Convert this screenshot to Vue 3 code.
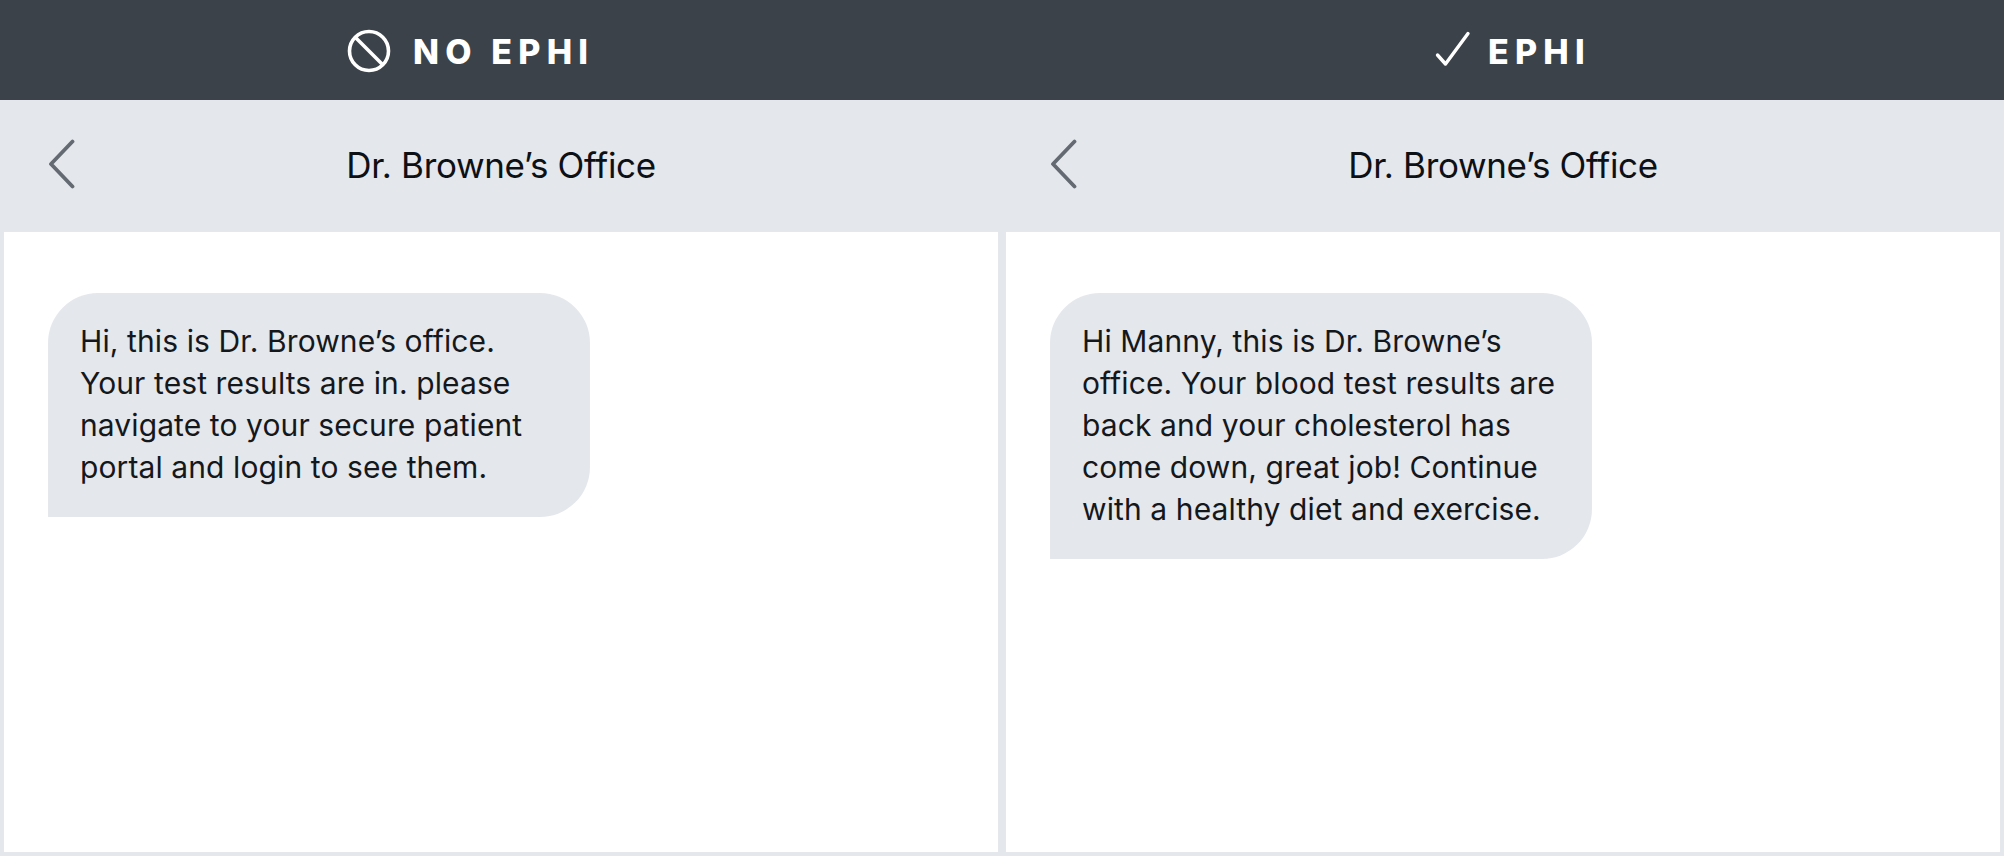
<template>
  <div class="page">
    <section v-for="panel in panels" :key="panel.label" class="panel">
      <header class="banner" :class="panel.bannerClass">
        <svg v-if="panel.icon === 'no'" class="icon-no" width="44" height="44" viewBox="0 0 44 44" fill="none">
          <circle cx="22" cy="22" r="19.5" stroke="#fff" stroke-width="3.6" />
          <path d="M8.5 8.5 35.5 35.5" stroke="#fff" stroke-width="3.6" />
        </svg>
        <svg v-else class="icon-check" width="36" height="36" viewBox="0 0 36 36" fill="none">
          <path d="M2.5 24 10.5 33 33 2.5" stroke="#fff" stroke-width="3.4" stroke-linecap="round" stroke-linejoin="round" />
        </svg>
        <span class="banner-label">{{ panel.label }}</span>
      </header>
      <nav class="nav">
        <svg class="back" width="28" height="50" viewBox="0 0 28 50" fill="none">
          <path d="M24.5 2.5 3 25 24.5 47.5" stroke="#646a72" stroke-width="3.8" stroke-linecap="round" stroke-linejoin="round" />
        </svg>
        <span class="nav-title">Dr. Browne’s Office</span>
      </nav>
      <div class="thread">
        <div class="bubble">
          <span v-for="line in panel.lines" :key="line" class="line">{{ line }}</span>
        </div>
      </div>
    </section>
  </div>
</template>

<script setup>
const panels = [
  {
    label: 'NO EPHI',
    icon: 'no',
    bannerClass: 'banner-left',
    lines: [
      'Hi, this is Dr. Browne’s office.',
      'Your test results are in. please',
      'navigate to your secure patient',
      'portal and login to see them.'
    ]
  },
  {
    label: 'EPHI',
    icon: 'check',
    bannerClass: 'banner-right',
    lines: [
      'Hi Manny, this is Dr. Browne’s',
      'office. Your blood test results are',
      'back and your cholesterol has',
      'come down, great job! Continue',
      'with a healthy diet and exercise.'
    ]
  }
]
</script>

<style>
body {
  background: #e4e7ec;
}
</style>

<style scoped>
.page {
  display: grid;
  grid-template-columns: 1fr 1fr;
  height: 856px;
  background: #e4e7ec;
  font-family: Inter, "Liberation Sans", sans-serif;
}

.panel {
  display: flex;
  flex-direction: column;
  min-width: 0;
}

.banner {
  display: flex;
  align-items: center;
  box-sizing: border-box;
  height: 100px;
  padding-top: 2px;
  background: #3c4249;
  color: #fff;
}

.banner-left {
  padding-left: 347px;
  gap: 22px;
}

.banner-right {
  padding-left: 433px;
  gap: 17px;
}

.icon-check {
  margin-bottom: 4px;
}

.banner-label {
  margin-top: 2px;
  font-size: 34px;
  font-weight: 800;
  letter-spacing: 6.2px;
  line-height: 1;
}

.nav {
  position: relative;
  display: flex;
  align-items: center;
  justify-content: center;
  height: 132px;
  padding-bottom: 2px;
  box-sizing: border-box;
  color: #0d1014;
}

.back {
  position: absolute;
  left: 48px;
  top: 39px;
}

.nav-title {
  font-size: 35px;
  letter-spacing: -0.33px;
}

.thread {
  flex: 1;
  margin: 0 4px 4px;
  padding: 61px 0 0 44px;
  background: #fff;
}

.bubble {
  width: 542px;
  box-sizing: border-box;
  padding: 27px 32px 29px;
  background: #e4e7ec;
  border-radius: 50px 50px 50px 0;
  font-size: 30px;
  line-height: 42px;
  letter-spacing: 0.1px;
  color: #14181c;
}

.line {
  display: block;
  white-space: nowrap;
}
</style>
